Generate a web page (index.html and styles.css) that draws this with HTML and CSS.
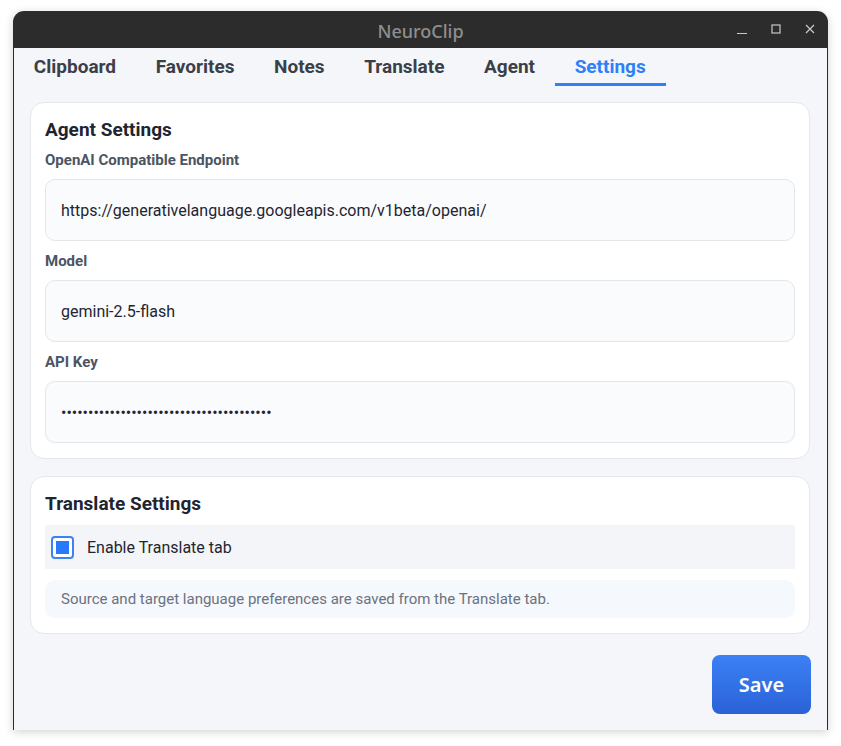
FILE: index.html
```html
<!DOCTYPE html>
<html lang="en">
<head>
  <meta charset="UTF-8">
  <meta name="viewport" content="width=device-width, initial-scale=1.0">
  <title>NeuroClip</title>
  <link rel="stylesheet" href="styles.css">
</head>
<body>
  <div class="window">
    <div class="titlebar">
      <span class="title">NeuroClip</span>
      <div class="controls">
        <svg class="ctl" viewBox="0 0 12 12"><path d="M1 10.5h10" /></svg>
        <svg class="ctl" viewBox="0 0 12 12"><rect x="2" y="2" width="8" height="8" /></svg>
        <svg class="ctl" viewBox="0 0 12 12"><path d="M2 2l8 8M10 2l-8 8" /></svg>
      </div>
    </div>
    <div class="app">
      <nav class="tabs">
        <a class="tab">Clipboard</a>
        <a class="tab">Favorites</a>
        <a class="tab">Notes</a>
        <a class="tab">Translate</a>
        <a class="tab">Agent</a>
        <a class="tab active">Settings</a>
      </nav>
      <main class="settings">
        <section class="card">
          <h2>Agent Settings</h2>
          <div class="field">
            <label>OpenAI Compatible Endpoint</label>
            <input type="text" value="https://generativelanguage.googleapis.com/v1beta/openai/">
          </div>
          <div class="field">
            <label>Model</label>
            <input type="text" value="gemini-2.5-flash">
          </div>
          <div class="field">
            <label>API Key</label>
            <input type="password" value="AIzaSyD3xampleKeyValue0123456789abcdefg">
          </div>
        </section>
        <section class="card">
          <h2>Translate Settings</h2>
          <div class="check-row">
            <span class="checkbox"><span class="tick"></span></span>
            <span>Enable Translate tab</span>
          </div>
          <p class="note">Source and target language preferences are saved from the Translate tab.</p>
        </section>
        <div class="actions">
          <button class="save">Save</button>
        </div>
      </main>
    </div>
  </div>
</body>
</html>
```

FILE: styles.css
```css
body, html {
  margin: 0;
  padding: 0;
  background: #ffffff;
  font-family: Roboto, "Liberation Sans", sans-serif;
}
.window {
  margin: 11px 13px;
  width: 815px;
  height: 719px;
  border-radius: 11px 11px 0 0;
  overflow: hidden;
  display: flex;
  flex-direction: column;
  box-shadow: 0 2px 10px rgba(0, 0, 0, 0.18);
}
.titlebar {
  height: 37px;
  flex: none;
  background: #2c2c2c;
  display: flex;
  align-items: center;
  justify-content: center;
  position: relative;
}
.title {
  color: #8e8e8e;
  font-family: "Noto Sans", sans-serif;
  font-weight: 500;
  font-size: 18px;
  margin-top: 2px;
}
.controls {
  position: absolute;
  right: 12px;
  top: 12px;
  display: flex;
  gap: 22px;
}
.ctl {
  width: 12px;
  height: 12px;
  fill: none;
  stroke: #c9c9c9;
  stroke-width: 1.2;
}
.app {
  flex: 1;
  background: #f4f6fa;
  border: 1px solid #2c2c2c;
  border-top: none;
  display: flex;
  flex-direction: column;
}
.tabs {
  display: flex;
  height: 38px;
  flex: none;
}
.tab {
  padding: 0 19.8px;
  display: flex;
  align-items: center;
  font-size: 19px;
  font-weight: 700;
  color: #3b4048;
  border-bottom: 3px solid transparent;
  padding-top: 1px;
}
.tab.active {
  color: #2f7ff8;
  border-bottom-color: #2f7ff8;
}
.settings {
  padding: 16px 17px 16px 16px;
  display: flex;
  flex-direction: column;
  gap: 17px;
  flex: 1;
}
.card {
  background: #ffffff;
  border: 1px solid #e4e7ec;
  border-radius: 14px;
  padding: 15px 14px;
}
.card h2 {
  margin: 0 0 9px;
  font-size: 19px;
  line-height: 24px;
  font-weight: 700;
  color: #1f2530;
}
.field + .field {
  margin-top: 11px;
}
.field label {
  display: block;
  font-size: 15px;
  line-height: 18px;
  font-weight: 700;
  color: #4b5563;
  margin-bottom: 10px;
}
.field input {
  display: block;
  box-sizing: border-box;
  width: 100%;
  height: 62px;
  border: 1px solid #e2e5ea;
  border-radius: 10px;
  background: #fafbfd;
  padding: 0 15px;
  font-family: Roboto, sans-serif;
  font-size: 16px;
  color: #1f2530;
  outline: none;
}
.check-row {
  height: 44px;
  background: #f3f5f8;
  display: flex;
  align-items: center;
  gap: 13px;
  padding: 0 6px;
  font-size: 16px;
  color: #1f2530;
  margin-top: 8px;
}
.checkbox {
  width: 23px;
  height: 23px;
  box-sizing: border-box;
  border: 2px solid #3b82f6;
  border-radius: 4px;
  padding: 3px;
  background: #ffffff;
}
.tick {
  display: block;
  width: 13px;
  height: 13px;
  background: #2979ff;
}
.note {
  margin: 11px 0 0;
  height: 38px;
  display: flex;
  align-items: center;
  padding: 0 16px;
  border-radius: 10px;
  background: #f5f8fc;
  font-size: 15px;
  color: #6b7280;
}
.actions {
  display: flex;
  justify-content: flex-end;
  margin-top: 4px;
  margin-right: -1px;
}
.save {
  width: 99px;
  height: 59px;
  border: none;
  border-radius: 8px;
  background: linear-gradient(#3b80f5, #2b62d8);
  color: #ffffff;
  font-family: "Noto Sans", sans-serif;
  font-weight: 600;
  font-size: 20px;
}
```
